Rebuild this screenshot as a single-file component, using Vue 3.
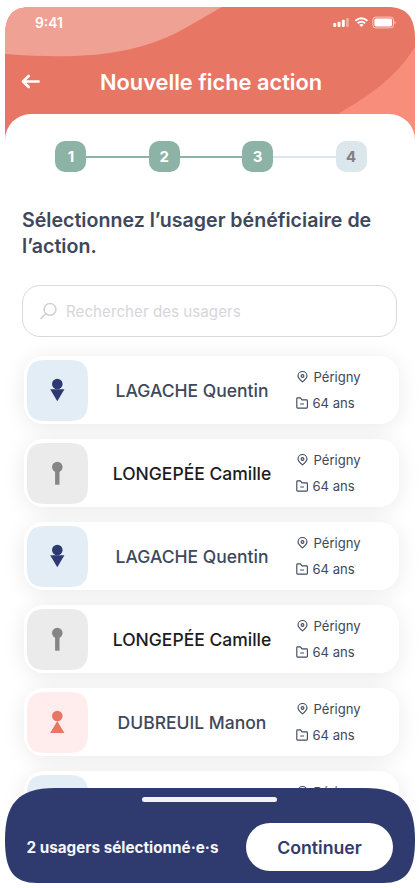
<script setup>
import { ref } from 'vue'

const steps = [
  { n: 1, done: true },
  { n: 2, done: true },
  { n: 3, done: true },
  { n: 4, done: false },
]

const search = ref('')

const users = [
  { name: 'LAGACHE Quentin', kind: 'blue' },
  { name: 'LONGEPÉE Camille', kind: 'grey' },
  { name: 'LAGACHE Quentin', kind: 'blue' },
  { name: 'LONGEPÉE Camille', kind: 'grey' },
  { name: 'DUBREUIL Manon', kind: 'coral' },
  { name: 'LAGACHE Quentin', kind: 'blue' },
]
</script>

<template>
  <div class="screen">
    <header class="header">
      <svg class="header-bg" viewBox="0 0 410 134" preserveAspectRatio="none">
        <path d="M0 134V30C0 8 8 0 26 0H382C402 0 410 10 410 32V134Z" fill="#e87664" />
        <path d="M0 47V30C0 8 8 0 26 0H217C204 7 187 18 169 27C120 50 70 52 0 47Z" fill="#efa194" />
        <path d="M410 40C388 75 358 92 328 110V134H410Z" fill="#f98d7c" />
      </svg>
      <div class="status">
        <span class="time">9:41</span>
        <svg class="status-icons" width="64" height="14" viewBox="0 0 64 14">
          <g fill="#fff">
            <rect x="0.3" y="8" width="2.9" height="3.9" rx=".8" />
            <rect x="4.6" y="6.8" width="2.9" height="5.1" rx=".8" />
            <rect x="8.9" y="4.8" width="2.9" height="7.1" rx=".8" />
            <rect x="13.1" y="3" width="2.7" height="8.9" rx=".8" opacity=".4" />
            <rect x="41.4" y="3.6" width="17.6" height="7.8" rx="1.4" />
            <path d="M61.6 5.7v3.8c1.5-.7 1.5-3.1 0-3.8Z" opacity=".6" />
          </g>
          <rect x="39.9" y="2.1" width="20.6" height="10.8" rx="2.8" fill="none" stroke="#fff" stroke-opacity=".6" />
          <g fill="none" stroke="#fff" stroke-width="1.9">
            <path d="M22.4 5.8q6-5 12 0" />
            <path d="M24.6 8.3q3.8-3.1 7.6 0" />
          </g>
          <path d="M26.2 9.9q2.2-1.7 4.4 0L28.4 12.1Z" fill="#fff" />
        </svg>
      </div>
      <div class="title-bar">
        <svg class="back" width="20" height="16" viewBox="0 0 20 16">
          <path d="M17.6 7.5H2.3M7.7 2L2 7.5L7.7 13" fill="none" stroke="#fff" stroke-width="2.6" stroke-linecap="round" stroke-linejoin="round" />
        </svg>
        <h1>Nouvelle fiche action</h1>
      </div>
    </header>

    <main class="panel">
      <ol class="stepper">
        <li v-for="s in steps" :key="s.n" :class="{ done: s.done }"><span>{{ s.n }}</span></li>
      </ol>

      <h2>Sélectionnez l’usager bénéficiaire de l’action.</h2>

      <label class="search">
        <svg width="18" height="18" viewBox="0 0 18 18">
          <g fill="none" stroke="#d2d2d5" stroke-width="1.6" stroke-linecap="round">
            <circle cx="11" cy="7.4" r="5.9" />
            <path d="M6.7 11.7L1.9 16.4" />
          </g>
        </svg>
        <input v-model="search" type="text" placeholder="Rechercher des usagers" />
      </label>

      <ul class="list">
        <li v-for="(u, i) in users" :key="i" class="card" :class="u.kind">
          <div class="avatar">
            <svg width="61" height="61" viewBox="0 0 61 61">
              <path class="tile" d="M0 20C0 5 5 0 20 0H41C56 0 61 5 61 20V41C61 56 56 61 41 61H20C5 61 0 56 0 41Z" />
              <g class="figure">
                <circle cx="30.3" cy="24" r="5.3" />
                <path v-if="u.kind === 'blue'" d="M23.2 29.3H37.4L30.3 41.3Z" />
                <rect v-else-if="u.kind === 'grey'" x="28.1" y="25.5" width="4.4" height="16.2" />
                <path v-else d="M30.3 28.9L37.4 41H23.2Z" />
              </g>
            </svg>
          </div>
          <p class="name">{{ u.name }}</p>
          <div class="meta">
            <div class="place">
              <svg width="12" height="13" viewBox="0 0 12 13">
                <g fill="none" stroke="#424c5e" stroke-width="1.15">
                  <path d="M5.5 11.9C3.5 10.3 1 8.2 1 6A4.5 4.5 0 0 1 10 6C10 8.2 7.5 10.3 5.5 11.9Z" />
                  <circle cx="5.5" cy="6" r="1.4" />
                </g>
              </svg>
              <span>Périgny</span>
            </div>
            <div class="age">
              <svg width="13" height="13" viewBox="0 0 13 13">
                <path d="M.8 11.3V2.7Q.8 1.9 1.6 1.9H4.4L6 3.9H10.6Q11.4 3.9 11.4 4.7V11.3Q11.4 12.1 10.6 12.1H1.6Q.8 12.1 .8 11.3ZM4.2 8H8" fill="none" stroke="#424c5e" stroke-width="1.15" stroke-linejoin="round" />
              </svg>
              <span>64 ans</span>
            </div>
          </div>
        </li>
      </ul>
    </main>

    <footer class="footer">
      <svg class="footer-bg" viewBox="0 0 410 95" preserveAspectRatio="none">
        <path d="M0 52C0 17 12 0 50 0H360C398 0 410 17 410 52C410 82 402 95 378 95H32C8 95 0 82 0 52Z" fill="#2f3a6e" />
      </svg>
      <i class="handle"></i>
      <div class="footer-row">
        <strong>2 usagers sélectionné·e·s</strong>
        <button type="button">Continuer</button>
      </div>
    </footer>
  </div>
</template>

<style>
body {
  background: #fff;
  overflow: hidden;
}
</style>

<style scoped>
* {
  box-sizing: border-box;
  margin: 0;
  padding: 0;
}
.screen {
  position: relative;
  width: 419px;
  height: 888px;
  padding: 7px 4px 0 5px;
  overflow: hidden;
  background: #fff;
  font-family: Inter, sans-serif;
  color: #3e485a;
}
.header {
  position: relative;
  height: 107px;
}
.header-bg {
  position: absolute;
  top: 0;
  left: 0;
  width: 410px;
  height: 134px;
}
.status {
  position: relative;
  display: flex;
  justify-content: space-between;
  padding: 8px 18px 0 30px;
  height: 54px;
}
.time {
  font-size: 13.8px;
  line-height: 16px;
  font-weight: 600;
  color: #fff;
}
.title-bar {
  position: relative;
  display: flex;
  align-items: center;
  height: 41px;
  padding-left: 16px;
}
.title-bar h1 {
  margin-left: 59px;
  font-size: 21.8px;
  line-height: 28px;
  font-weight: 600;
  color: #fff;
  white-space: nowrap;
}
.panel {
  position: relative;
  width: 410px;
  height: 774px;
  border-radius: 26px 26px 0 0;
  background: #fff;
  padding: 27px 16px 0 17px;
}
.stepper {
  display: flex;
  list-style: none;
  padding-left: 33.4px;
}
.stepper li {
  display: flex;
  align-items: center;
}
.stepper li + li::before {
  content: '';
  width: 62.4px;
  height: 2px;
  background: #8db2a6;
}
.stepper li:not(.done)::before {
  background: #dce6ed;
}
.stepper span {
  width: 31px;
  height: 31px;
  border-radius: 10px;
  background: #dce6ed;
  color: #818181;
  font-size: 15px;
  line-height: 31px;
  font-weight: 700;
  text-align: center;
}
.stepper .done span {
  background: #8db2a6;
  color: #fff;
}
h2 {
  margin-top: 35px;
  font-size: 19.6px;
  line-height: 26.4px;
  font-weight: 600;
  color: #3e485a;
}
.search {
  display: flex;
  align-items: center;
  gap: 9px;
  width: 375px;
  height: 52px;
  margin-top: 25.2px;
  padding-left: 16px;
  border: 1px solid #d9d9dc;
  border-radius: 18px;
  background: #fff;
}
.search input {
  width: 300px;
  padding-top: 1px;
  border: 0;
  outline: 0;
  background: none;
  font: 400 15.2px/20px Inter, sans-serif;
  color: #3e485a;
}
.search input::placeholder {
  color: #d6d6da;
  opacity: 1;
}
.list {
  display: flex;
  flex-direction: column;
  gap: 15px;
  margin: 18.5px 0 0 2px;
  list-style: none;
  isolation: isolate;
}
.card {
  position: relative;
  display: flex;
  align-items: center;
  width: 375px;
  height: 68px;
  padding-left: 3px;
  border-radius: 20px;
  background: #fff;
}
.card::before {
  content: '';
  position: absolute;
  inset: 0;
  z-index: -1;
  border-radius: 20px;
  box-shadow: 0 3px 22px rgba(0, 0, 0, 0.085);
}
.avatar {
  width: 61px;
  height: 61px;
  margin-top: 1px;
}
.avatar svg {
  display: block;
}
.blue .tile { fill: #e2edf6; }
.grey .tile { fill: #ebebeb; }
.coral .tile { fill: #ffeded; }
.blue .figure { fill: #2d3970; }
.grey .figure { fill: #868686; }
.coral .figure { fill: #e87664; }
.name {
  width: 208px;
  padding-top: 2px;
  font-size: 17.5px;
  line-height: 24px;
  font-weight: 500;
  text-align: center;
  white-space: nowrap;
}
.grey .name { color: #1c1c1c; }
.meta {
  display: flex;
  flex-direction: column;
  gap: 8px;
  font-size: 13.1px;
  line-height: 18px;
}
.meta > div {
  display: flex;
  align-items: center;
}
.place { gap: 4.5px; padding-left: 1px; }
.age { gap: 3.5px; }
.footer {
  position: absolute;
  left: 5px;
  top: 788px;
  width: 410px;
  height: 95px;
}
.footer-bg {
  position: absolute;
  top: 0;
  left: 0;
  width: 410px;
  height: 95px;
}
.handle {
  position: relative;
  display: block;
  width: 135px;
  height: 5px;
  margin: 0 0 0 137px;
  top: 8.5px;
  border-radius: 3px;
  background: #f2f2f4;
}
.footer-row {
  position: relative;
  display: flex;
  align-items: center;
  justify-content: space-between;
  padding: 30px 22px 0 21.5px;
}
.footer-row strong {
  font-size: 15.25px;
  font-weight: 700;
  color: #f6f6f8;
  white-space: nowrap;
}
.footer-row button {
  width: 147px;
  height: 48px;
  padding-top: 1px;
  border: 0;
  border-radius: 24px;
  background: #fff;
  font: 600 17.7px/24px Inter, sans-serif;
  color: #2f3a6e;
}
</style>
